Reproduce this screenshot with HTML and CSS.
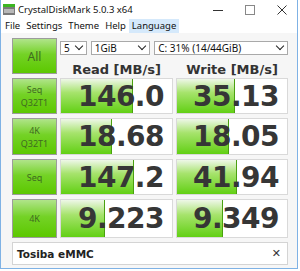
FILE: index.html
```html
<!DOCTYPE html>
<html lang="en">
<head>
  <meta charset="UTF-8">
  <title>CrystalDiskMark 5.0.3 x64</title>
  <link rel="stylesheet" href="styles.css">
</head>
<body>
  <div class="window">
    <div class="titlebar">
      <svg class="app-icon" width="12" height="11" viewBox="0 0 12 11">
        <rect x="0" y="0" width="12" height="3" fill="#3cb521"/>
        <rect x="0" y="3" width="12" height="8" fill="#7a7a7a"/>
        <rect x="1" y="5" width="10" height="4" fill="#b8b8b8"/>
      </svg>
      <span class="title">CrystalDiskMark 5.0.3 x64</span>
      <div class="controls">
        <svg width="10" height="10" viewBox="0 0 10 10"><line x1="0" y1="5.5" x2="10" y2="5.5" stroke="#333" stroke-width="1"/></svg>
        <svg width="10" height="10" viewBox="0 0 10 10"><rect x="0.5" y="0.5" width="9" height="9" fill="none" stroke="#888" stroke-width="1"/></svg>
        <svg width="10" height="10" viewBox="0 0 10 10"><path d="M0.5 0.5 L9.5 9.5 M9.5 0.5 L0.5 9.5" stroke="#333" stroke-width="1"/></svg>
      </div>
    </div>
    <div class="menubar">
      <span>File</span>
      <span>Settings</span>
      <span>Theme</span>
      <span>Help</span>
      <span class="active">Language</span>
    </div>

    <div class="panel">
      <div class="btn big">All</div>
      <div class="top">
        <div class="selects">
          <div class="select s-count">5<span class="chev"></span></div>
          <div class="select s-size">1GiB<span class="chev"></span></div>
          <div class="select s-drive">C: 31% (14/44GiB)<span class="chev"></span></div>
        </div>
        <div class="heads">
          <div>Read [MB/s]</div>
          <div>Write [MB/s]</div>
        </div>
      </div>

      <div class="btn">Seq<br>Q32T1</div>
      <div class="cell"><div class="bar" style="width: 71px"></div><span>146.0</span></div>
      <div class="cell"><div class="bar" style="width: 57px"></div><span>35.13</span></div>

      <div class="btn">4K<br>Q32T1</div>
      <div class="cell"><div class="bar" style="width: 50px"></div><span>18.68</span></div>
      <div class="cell"><div class="bar" style="width: 51px"></div><span>18.05</span></div>

      <div class="btn">Seq</div>
      <div class="cell"><div class="bar" style="width: 72px"></div><span>147.2</span></div>
      <div class="cell"><div class="bar" style="width: 59px"></div><span>41.94</span></div>

      <div class="btn">4K</div>
      <div class="cell"><div class="bar" style="width: 43px"></div><span>9.223</span></div>
      <div class="cell"><div class="bar" style="width: 45px"></div><span>9.349</span></div>

      <div class="comment">
        <span>Tosiba eMMC</span>
        <span class="clear">&#x2715;</span>
      </div>
    </div>
  </div>
</body>
</html>
```

FILE: styles.css
```css
body {
  margin: 0;
  background: #ffffff;
  font-family: "Noto Sans", "Liberation Sans", sans-serif;
}

.window {
  width: 296px;
  height: 268px;
  border-left: 1px solid #7fb2e5;
  border-right: 1px solid #7fb2e5;
  border-bottom: 1px solid #7fb2e5;
  background: #f6f6f6;
  overflow: hidden;
}

.titlebar {
  height: 19px;
  background: #ffffff;
  display: flex;
  align-items: center;
  padding-left: 2px;
}

.app-icon {
  margin-right: 3px;
}

.title {
  font-size: 9.5px;
  color: #111;
}

.controls {
  margin-left: auto;
  display: flex;
  gap: 22px;
  padding-right: 10px;
}

.menubar {
  height: 14px;
  background: #ffffff;
  display: flex;
  align-items: center;
  padding-left: 1px;
  font-size: 9.5px;
  color: #111;
}

.menubar span {
  padding: 0 3px;
  line-height: 14px;
}

.menubar .active {
  background: #d5e9fb;
}

.panel {
  display: grid;
  grid-template-columns: 45px 113px 112px;
  grid-template-rows: 36px 36px 37px 36px 39px 23px;
  column-gap: 3px;
  row-gap: 4px;
  padding: 5px 0 0 11px;
}

.btn {
  border: 1px solid #9c9c9c;
  background: linear-gradient(#b0e48a, #74d226 45%, #5cc800);
  color: #3f6b21;
  font-size: 9px;
  line-height: 13px;
  display: flex;
  align-items: center;
  justify-content: center;
  text-align: center;
  box-sizing: border-box;
}

.btn.big {
  font-size: 12px;
}

.top {
  grid-column: 2 / 4;
  display: flex;
  flex-direction: column;
}

.selects {
  display: flex;
  gap: 4px;
  margin-top: 3px;
}

.select {
  position: relative;
  height: 14px;
  border: 1px solid #a9a9a9;
  background: #fff;
  box-sizing: border-box;
  font-size: 10px;
  line-height: 12px;
  padding-left: 3px;
  color: #111;
}

.chev {
  position: absolute;
  right: 4px;
  top: 1px;
  width: 5px;
  height: 5px;
  border-right: 1.5px solid #222;
  border-bottom: 1.5px solid #222;
  transform: rotate(45deg);
}

.s-count { width: 27px; }
.s-size { width: 60px; }
.s-drive { width: 135px; }

.heads {
  display: grid;
  grid-template-columns: 113px 112px;
  column-gap: 3px;
  margin-top: 7px;
  font-family: "DejaVu Sans", sans-serif;
  font-weight: bold;
  font-size: 13px;
  color: #333;
  text-align: center;
}

.cell {
  position: relative;
  border: 1px solid #d9d9d9;
  background: #fff;
  box-sizing: border-box;
  display: flex;
  align-items: center;
  justify-content: flex-end;
  padding-right: 8px;
}

.bar {
  position: absolute;
  left: 0;
  top: 0;
  bottom: 0;
  background: linear-gradient(#eef7e8, #a6e36c 40%, #62d014);
  border-right: 1px solid #4aa010;
}

.cell span {
  position: relative;
  font-family: "DejaVu Sans", sans-serif;
  font-weight: bold;
  font-size: 28px;
  color: #363636;
  letter-spacing: -0.5px;
}

.comment {
  grid-column: 1 / 4;
  border: 1px solid #d4d4d4;
  background: #fff;
  display: flex;
  align-items: center;
  justify-content: space-between;
  padding: 0 6px 0 4px;
  font-family: "DejaVu Sans", sans-serif;
  font-weight: bold;
  font-size: 10.5px;
  color: #222;
}

.clear {
  font-weight: normal;
  font-size: 11px;
  color: #333;
}
```
